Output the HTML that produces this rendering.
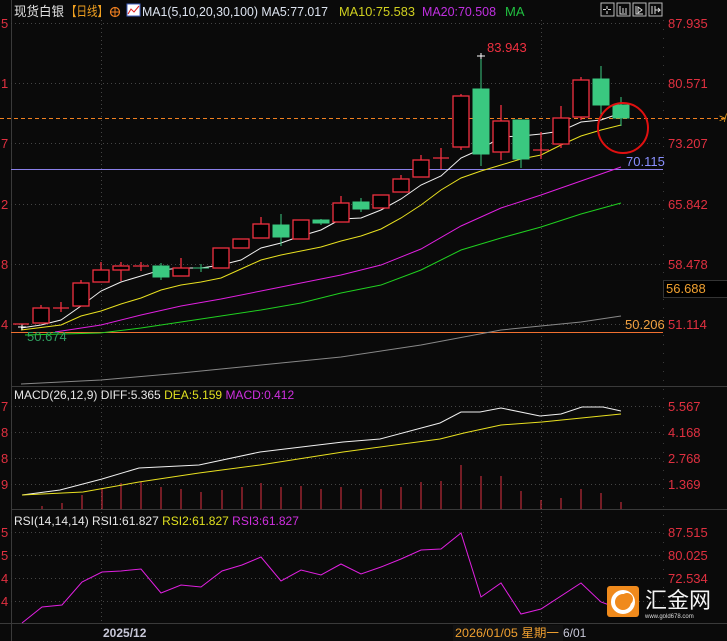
<!DOCTYPE html>
<html><head><meta charset="utf-8"><style>
html,body{margin:0;padding:0;background:#0a0a0a;width:727px;height:641px;overflow:hidden}
svg{display:block}
text{font-family:"Liberation Sans","Noto Sans CJK SC",sans-serif}
</style></head><body>
<svg width="727" height="641" viewBox="0 0 727 641" xmlns="http://www.w3.org/2000/svg">
<rect width="727" height="641" fill="#0a0a0a"/>
<line x1="11.5" y1="0" x2="11.5" y2="641" stroke="#3a3a3a"/>
<line x1="663.5" y1="20" x2="663.5" y2="624" stroke="#3a3a3a" stroke-dasharray="1,8"/>
<line x1="11" y1="386.5" x2="727" y2="386.5" stroke="#3a3a3a"/>
<line x1="11" y1="509.5" x2="727" y2="509.5" stroke="#3a3a3a"/>
<line x1="0" y1="623.5" x2="727" y2="623.5" stroke="#3a3a3a"/>
<g stroke="#444" stroke-dasharray="1,3">
<line x1="11" y1="23.5" x2="663" y2="23.5"/><line x1="11" y1="83.5" x2="663" y2="83.5"/>
<line x1="11" y1="143.5" x2="663" y2="143.5"/><line x1="11" y1="204.5" x2="663" y2="204.5"/>
<line x1="11" y1="264.5" x2="663" y2="264.5"/><line x1="11" y1="324.5" x2="663" y2="324.5"/>
<line x1="11" y1="406.5" x2="663" y2="406.5"/><line x1="11" y1="432.5" x2="663" y2="432.5"/>
<line x1="11" y1="458.5" x2="663" y2="458.5"/><line x1="11" y1="484.5" x2="663" y2="484.5"/>
<line x1="11" y1="532.5" x2="663" y2="532.5"/><line x1="11" y1="555.5" x2="663" y2="555.5"/>
<line x1="11" y1="578.5" x2="663" y2="578.5"/><line x1="11" y1="601.5" x2="663" y2="601.5"/>
<line x1="101.5" y1="20" x2="101.5" y2="623"/><line x1="541.5" y1="20" x2="541.5" y2="623"/>
</g>
<!-- header -->
<text x="14" y="16" font-size="13" fill="#e0e0e0" textLength="50" lengthAdjust="spacingAndGlyphs">现货白银</text>
<text x="66" y="16" font-size="13" fill="#f0a020" textLength="42" lengthAdjust="spacingAndGlyphs">【日线】</text>
<circle cx="115" cy="12" r="4.5" fill="none" stroke="#f08020" stroke-width="1.2"/><line x1="110" y1="12" x2="120" y2="12" stroke="#f08020"/><line x1="115" y1="7" x2="115" y2="17" stroke="#f08020"/>
<rect x="127" y="4" width="13" height="12" fill="#fff" stroke="#4060c0"/><polyline points="128,14 131,9 134,12 139,6" fill="none" stroke="#e02020"/>
<text x="142" y="16" font-size="13" fill="#dde4f0" textLength="186" lengthAdjust="spacingAndGlyphs">MA1(5,10,20,30,100) MA5:77.017</text>
<text x="339" y="16" font-size="13" fill="#d0d020" textLength="76" lengthAdjust="spacingAndGlyphs">MA10:75.583</text>
<text x="422" y="16" font-size="13" fill="#c030e0" textLength="74" lengthAdjust="spacingAndGlyphs">MA20:70.508</text>
<text x="505" y="16" font-size="13" fill="#20c040">MA</text>
<g fill="none" stroke="#bbb"><rect x="601" y="3" width="13" height="13"/><rect x="617" y="3" width="13" height="13"/><rect x="633" y="3" width="13" height="13"/><rect x="649" y="3" width="13" height="13"/></g>
<g stroke="#ddd" fill="none"><path d="M607 6v3M607 11v3M603 9.5h3M608 9.5h3"/><path d="M620 6v8h7M623 8v5M626 8v5"/><path d="M636 6v8h7M638 7l4 3-4 3z"/><path d="M652 6v8M655 6v8M655 10h5l-2-2M660 10l-2 2"/></g>
<g font-size="13" fill="#e03040">
<text x="1" y="28">5</text><text x="1" y="88">1</text><text x="1" y="148">7</text><text x="1" y="209">2</text><text x="1" y="269">8</text><text x="1" y="329">4</text>
<text x="1" y="411">7</text><text x="1" y="437">8</text><text x="1" y="463">8</text><text x="1" y="489">9</text>
<text x="1" y="537">5</text><text x="1" y="560">5</text><text x="1" y="583">4</text><text x="1" y="606">4</text>
</g>
<g font-size="13" fill="#e03040">
<text x="668" y="28">87.935</text><text x="668" y="88">80.571</text><text x="668" y="148">73.207</text><text x="668" y="209">65.842</text><text x="668" y="269">58.478</text><text x="668" y="329">51.114</text>
<text x="668" y="411">5.567</text><text x="668" y="437">4.168</text><text x="668" y="463">2.768</text><text x="668" y="489">1.369</text>
<text x="668" y="537">87.515</text><text x="668" y="560">80.025</text><text x="668" y="583">72.534</text>
</g>
<rect x="663.5" y="280.5" width="64" height="17" fill="#000" stroke="#333"/>
<text x="666" y="293" font-size="13" fill="#f0a030">56.688</text>
<line x1="0" y1="118.5" x2="727" y2="118.5" stroke="#f08020" stroke-dasharray="4,3"/>
<text x="719" y="122" font-size="11" fill="#f0a020">≯</text>
<line x1="11" y1="169.5" x2="663" y2="169.5" stroke="#8a80e8"/>
<text x="626" y="166" font-size="13" fill="#8a90ff">70.115</text>
<line x1="11" y1="332.5" x2="663" y2="332.5" stroke="#f07030"/>
<text x="625" y="329" font-size="13" fill="#f0a040">50.206</text>
<polyline fill="none" stroke="#888" points="21,384 101,380 181,373 261,365 341,357 421,345 501,330 581,322 621,316"/>
<polyline fill="none" stroke="#20d020" points="25,335 100,333 141,328 181,322 221,316 261,310 301,303 341,293 381,285 421,270 461,250 501,238 541,227 581,214 621,203"/>
<polyline fill="none" stroke="#e020e0" points="55,332 101,325 141,315 181,306 221,299 261,291 301,283 341,275 381,265 421,249 461,226 501,208 541,195 581,181 621,167"/>
<polyline fill="none" stroke="#e8e020" points="21,330 61,325 81,316 101,311 121,304 141,298 161,290 181,285 201,282 221,278 241,269 261,260 281,255 301,251 321,247 341,241 361,236 381,229 401,218 421,205 441,190 461,178 481,171 501,165 521,159 541,155 561,145 581,136 601,130 621,125"/>
<polyline fill="none" stroke="#f0f0f0" points="21,328 41,325 61,320 81,306 101,291 121,282 141,276 161,270 181,268 201,268 221,265 241,260 261,248 281,243 301,236 321,230 341,219 361,218 381,210 401,199 421,185 441,176 461,158 481,149 501,137 521,136 541,134 561,131 581,122 601,120 621,113"/>
<text x="27" y="341" font-size="13" fill="#30a060">50.674</text>
<path d="M18 327h8M22 324v6" stroke="#fff"/>
<g fill="#000" stroke="#f03040" stroke-width="1.3">
<path d="M13 324h16M61 302v10M53 308h16M121 262v4M121 270v11M141 262v9M133 266h16M181 258v10M441 148v21M433 158h16M541 132v27M533 150h16"/>
<rect x="33" y="308" width="16" height="15"/>
<rect x="73" y="283" width="16" height="23"/>
<rect x="93" y="270" width="16" height="12"/>
<rect x="113" y="266" width="16" height="4"/>
<rect x="173" y="268" width="16" height="8"/>
<rect x="213" y="248" width="16" height="20"/>
<rect x="233" y="239" width="16" height="9"/>
<rect x="253" y="224" width="16" height="14"/>
<rect x="293" y="220" width="16" height="19"/>
<rect x="333" y="203" width="16" height="19"/>
<rect x="373" y="195" width="16" height="13"/>
<rect x="393" y="179" width="16" height="13"/>
<rect x="413" y="160" width="16" height="17"/>
<rect x="453" y="96" width="16" height="51"/>
<rect x="493" y="121" width="16" height="31"/>
<rect x="553" y="118" width="16" height="26"/>
<rect x="573" y="80" width="16" height="37"/>
</g>
<g stroke="#f03040" stroke-width="1.3"><path d="M41 305v3M81 280v3M101 262v8M261 217v7M341 196v7M401 175v4M421 155v5M461 94v2M461 147v3M501 105v16M501 152v8M561 106v12M561 144v4M581 77v3M581 117v3"/></g>
<g fill="#3ac880" stroke="#3ac880">
<rect x="153" y="266" width="16" height="11"/><path d="M161 263v17"/>
<path d="M201 264v8M193 268h16"/>
<rect x="273" y="225" width="16" height="12"/><path d="M281 214v32"/>
<rect x="313" y="220" width="16" height="3"/><path d="M321 219v6"/>
<rect x="353" y="202" width="16" height="7"/><path d="M361 198v14"/>
<rect x="473" y="89" width="16" height="65"/><path d="M481 56v110"/>
<rect x="513" y="120" width="16" height="39"/><path d="M521 159v9"/>
<rect x="593" y="79" width="16" height="26"/><path d="M601 66v52"/>
<rect x="613" y="105" width="16" height="13"/><path d="M621 97v29"/>
</g>
<path d="M477 56h8M481 53v6" stroke="#fff"/>
<text x="487" y="52" font-size="13" fill="#f03040">83.943</text>
<circle cx="623" cy="128" r="25" fill="none" stroke="#e01010" stroke-width="2"/>
<text x="14" y="399" font-size="12"><tspan fill="#e8e8e8">MACD(26,12,9) DIFF:5.365 </tspan><tspan fill="#e0e020">DEA:5.159 </tspan><tspan fill="#d030e0">MACD:0.412</tspan></text>
<path stroke="#e03040" d="M42 509V506M62 509V503M82 509V495M102 509V488M121 509V483M141 509V482M161 509V487M181 509V489M201 509V492M222 509V490M242 509V487M261 509V483M281 509V487M301 509V486M321 509V489M341 509V487M361 509V489M381 509V489M401 509V487M421 509V482M441 509V481M461 509V465M481 509V476M501 509V476M521 509V491M541 509V500M561 509V498M581 509V489M601 509V493M621 509V502"/>
<polyline fill="none" stroke="#f0f0f0" points="22,495 60,490 102,479 139,468 199,465 260,452 343,442 380,439 440,423 461,412 480,412 501,408 540,416 561,414 582,407 603,407 621,411"/>
<polyline fill="none" stroke="#e8e020" points="22,495 83,492 139,482 199,473 260,465 343,452 440,439 464,433 501,425 542,422 621,414"/>
<text x="14" y="525" font-size="12"><tspan fill="#e8e8e8">RSI(14,14,14) RSI1:61.827 </tspan><tspan fill="#e0e020">RSI2:61.827 </tspan><tspan fill="#d030e0">RSI3:61.827</tspan></text>
<polyline fill="none" stroke="#e020e0" points="22,623 42,607 62,605 82,582 102,572 121,571 141,569 161,593 181,585 201,587 222,571 242,565 261,557 281,581 301,570 321,575 341,564 361,574 381,567 401,559 421,550 441,549 461,533 481,597 501,583 521,614 541,609 581,583 601,602 612,606"/>
<rect x="607" y="586" width="32" height="31" rx="3" fill="#f08a1c"/>
<circle cx="623" cy="602" r="10" fill="none" stroke="#fff" stroke-width="4"/>
<circle cx="627" cy="599" r="6" fill="#f08a1c"/>
<text x="645" y="608" font-size="22" fill="#f4f4f4">汇金网</text>
<text x="645" y="618" font-size="6" fill="#ddd">www.gold678.com</text>
<text x="103" y="637" font-size="12" font-weight="bold" fill="#c8c8d8">2025/12</text>
<rect x="453" y="625" width="110" height="16" fill="#111"/>
<text x="455" y="637" font-size="12" fill="#f0a030" textLength="104" lengthAdjust="spacingAndGlyphs">2026/01/05 星期一</text>
<text x="563" y="637" font-size="12" fill="#c8c8d8">6/01</text>
</svg>
</body></html>
